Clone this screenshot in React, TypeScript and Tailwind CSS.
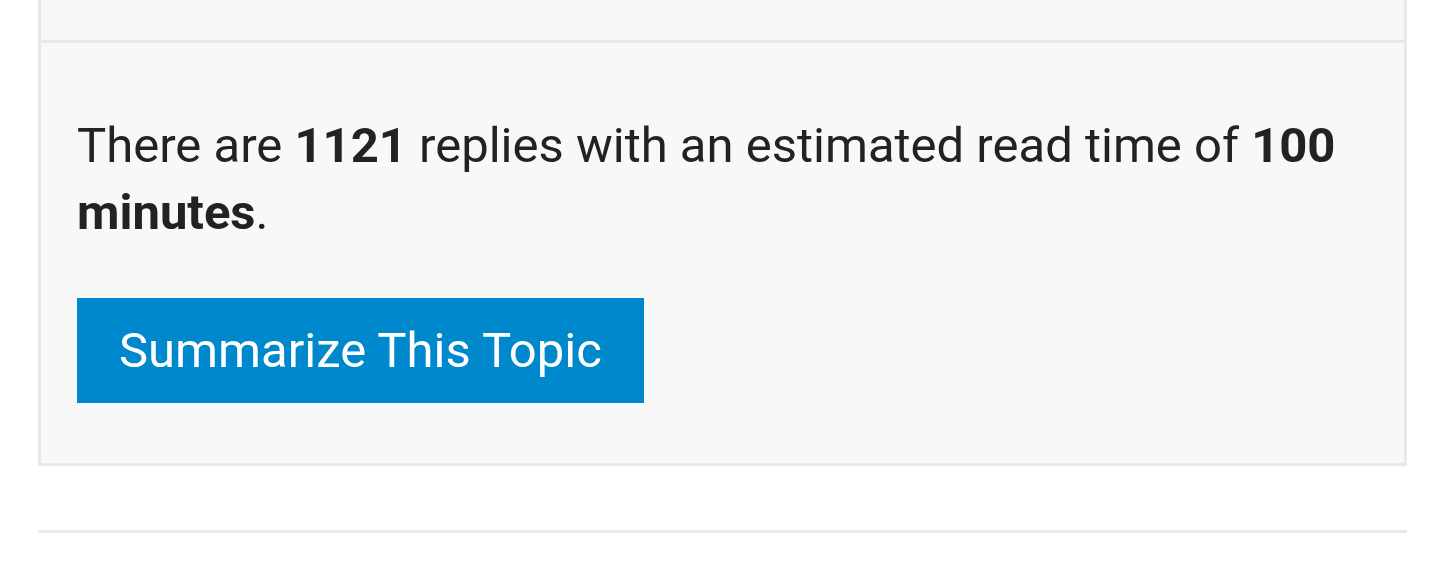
import React from "react";

function SummaryBox() {
  return (
    <div className="border-x-[3px] border-b-[3px] border-[#e9e9e9] bg-[#f8f8f8] px-[36px] pt-[69px] pb-[60px]">
      <p className="text-[49px] leading-[67px] text-[#222222]">
        There are <strong className="font-bold">1121</strong> replies with an estimated read time of{" "}
        <strong className="font-bold">100 minutes</strong>.
      </p>
      <button className="mt-[52px] h-[105px] w-[567px] bg-[#0088cc] text-left pl-[42px] text-[49px] text-white">
        Summarize This Topic
      </button>
    </div>
  );
}

export default function App() {
  return (
    <div
      className="min-h-[564px] w-[1440px] bg-white pl-[38px]"
      style={{ fontFamily: "Roboto, 'Liberation Sans', sans-serif" }}
    >
      <div className="w-[1369px]">
        <div className="h-[43px] border-x-[3px] border-b-[3px] border-[#e9e9e9] bg-[#f7f7f7]" />
        <SummaryBox />
        <div className="mt-[64px] h-[3px] bg-[#e9e9e9]" />
      </div>
    </div>
  );
}
